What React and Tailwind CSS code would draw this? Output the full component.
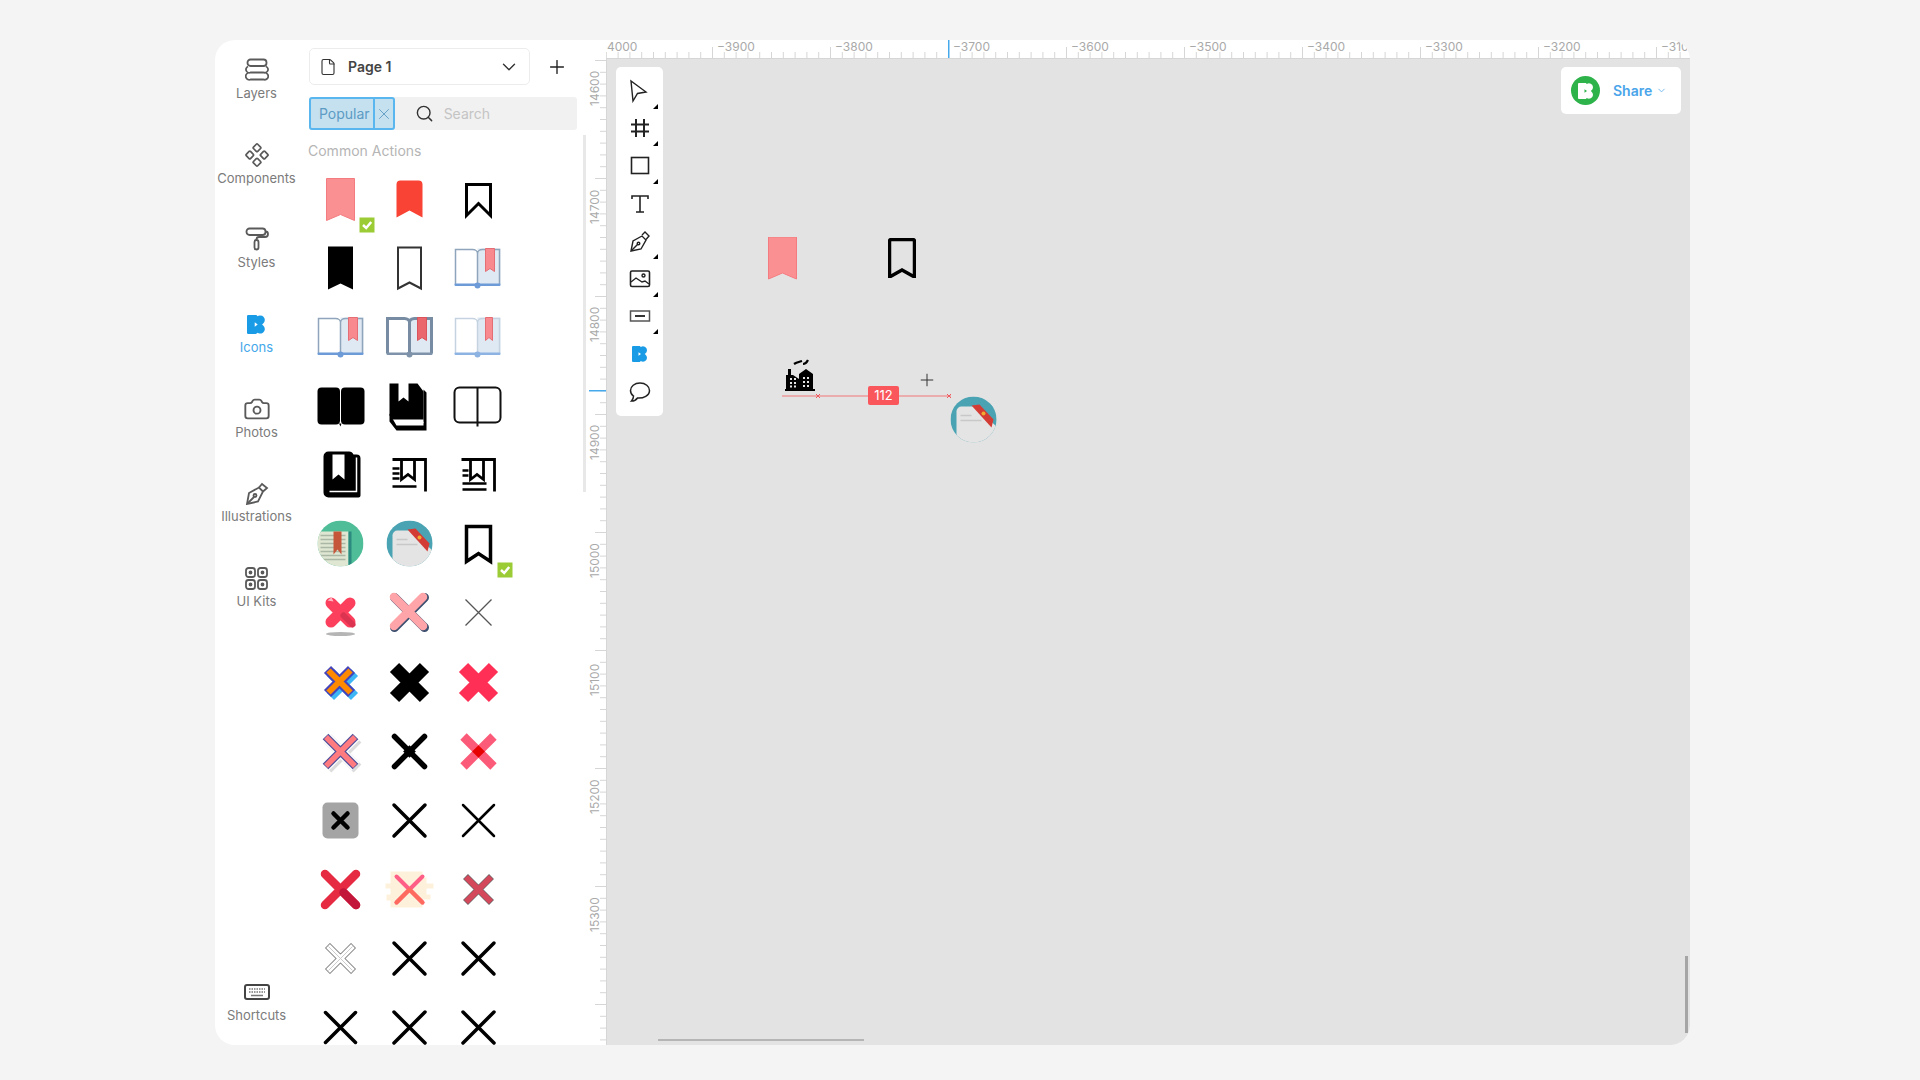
import React from 'react'
import { Plus, ChevronDown, Search, X, File, Camera } from 'lucide-react'

const LOGO = 'M0 1a1 1 0 0 1 1-1h6c1 0 1.500.5 1.800 1a4 4 0 0 1 6.200 3c0 2-1 3-2.300 4 1.300 1 2.300 2 2.300 4a4 4 0 0 1-6.200 3c-.3.500-.8 1-1.800 1H1a1 1 0 0 1-1-1z M6.500 6.200 9 8 6.500 9.800z'

const Logo = ({ fill = '#1a9be6', size = 16 }) => (
    <svg width={size} height={size} viewBox="0 0 16 16"><path d={LOGO} fill={fill} fillRule="evenodd" /></svg>
)

// all cell drawings are centred on 0,0 of a 69px box
const Cell = ({ children }) => (
    <svg width="69" height="69" viewBox="-34.5 -34.5 69 69" className="block overflow-visible">{children}</svg>
)

const Badge = () => (
    <g>
        <rect x="19" y="19" width="15" height="15" fill="#9ccc35" />
        <path d="M22.500 26.500l3.200 3 5-6" fill="none" stroke="#fff" strokeWidth="2.500" />
    </g>
)

const Mark = ({ w, top, bottom, notch, fill = 'none', stroke, sw = 0, r = 0 }) => (
    <path
        d={`M${-w} ${bottom}V${top + r}${r ? `a${r} ${r} 0 0 1 ${r} ${-r}` : ''}H${w - r}${r ? `a${r} ${r} 0 0 1 ${r} ${r}` : ''}V${bottom}L0 ${notch}Z`}
        fill={fill}
        stroke={stroke}
        strokeWidth={sw}
    />
)

const Book = ({ dx = 0, frame = '#8fa5bb', sw = 1.500, bar = '#6d9bd8', mark = '#f88a8f', markLine = '#e56e74', mw = 9, shade = '#dfe9f3', left = '#fff' }) => (
    <g transform={`translate(${dx} 0)`}>
        <rect x="-23" y="-19" width="23" height="36" fill={left} />
        <rect x="0" y="-19" width="23" height="36" fill={shade} />
        <path d="M-22 17V-18H-5C-2-18 0-16 0-14V17M0-14C0-16 2-18 5-18H22V17" fill="none" stroke={frame} strokeWidth={sw} />
        <rect x="-23" y="16" width="46" height="2.500" fill={bar} rx="1" />
        <circle cx="0" cy="18" r="3" fill={bar} />
        <path d={`M${8} -19H${8 + mw}V4L${8 + mw / 2} 1L8 4Z`} fill={mark} stroke={markLine} />
    </g>
)

const Cross = ({ s = 17, sw = 4, color = '#000', cap = 'round' }) => (
    <path d={`M${-s} ${-s}L${s} ${s}M${s} ${-s}L${-s} ${s}`} stroke={color} strokeWidth={sw} strokeLinecap={cap} fill="none" />
)

const Lines = ({ wide }) => (
    <g fill="none" stroke="#000" strokeWidth="2.800">
        <path d="M-17-15H16V17" />
        <path d="M-8-15V5L-1.500 0 5 5V-15" />
        {wide
            ? <path d="M-16-4H-10M-16 1H-10M-16 9H8M-16 15H8" strokeWidth="2.500" />
            : <path d="M-17-6H-10M-17-1H-10M-17 4H-10M-17 12H7" strokeWidth="2.500" />}
    </g>
)

const GreenCircle = () => (
    <g>
        <clipPath id="green-clip"><circle r="23" /></clipPath>
        <g clipPath="url(#green-clip)">
            <rect x="-23" y="-23" width="46" height="46" fill="#4fbe98" />
            <rect x="-23" y="-12" width="31" height="35" fill="#dfe6d2" />
            <rect x="8" y="-12" width="3" height="35" fill="#2d8a80" />
            <path d="M-20-8H5M-20-4H5M-20 0H5M-20 4H5M-20 8H5M-20 12H5M-20 16H5" stroke="#a9b7a4" strokeWidth="1.500" />
            <path d="M-7-12H1V11L-3 6-7 11Z" fill="#c5563a" />
        </g>
    </g>
)

const TealCircle = ({ id }) => (
    <g>
        <clipPath id={id}><circle r="23" /></clipPath>
        <g clipPath={`url(#${id})`}>
            <rect x="-23" y="-23" width="46" height="46" fill="#4aa3b3" />
            <rect x="-17" y="-13" width="40" height="40" rx="5" fill="#e4e4e4" />
            <path d="M-1-15L23 7V-15Z" fill="#4aa3b3" />
            <path d="M-2-14L6-15 20 0 18 8Z" fill="#d23c34" />
            <circle cx="10" cy="-6" r="2" fill="#f2a930" />
            <path d="M-13-4H-2M-13 1H8" stroke="#c8c8c8" strokeWidth="1.500" />
        </g>
    </g>
)

const BlockX = ({ s = 20, sw = 12, color }) => (
    <path d={`M${-s + 6} ${-s + 6}L${s - 6} ${s - 6}M${s - 6} ${-s + 6}L${-s + 6} ${s - 6}`} stroke={color} strokeWidth={sw} />
)

const cells = [
    <g><Mark w={14} top={-20} bottom={22} notch={16} fill="#fb9092" stroke="#f47c80" sw={1} /><Badge /></g>,
    <Mark w={13} top={-18} bottom={19} notch={12} fill="#f94334" r={4} />,
    <Mark w={12} top={-14} bottom={17} notch={5} stroke="#000" sw={3} />,

    <Mark w={12.500} top={-21} bottom={22} notch={16} fill="#000" />,
    <Mark w={11.500} top={-20} bottom={21} notch={15} stroke="#333" sw={2} fill="#fff" />,
    <Book dx={-1} />,

    <Book />,
    <Book frame="#778ca2" sw={3} mark="#e9676d" markLine="#d9545b" bar="#7e93a9" />,
    <Book dx={-1} frame="#c5d3e1" mw={7} bar="#8db3e3" />,

    <g>
        <rect x="-23" y="-18" width="22.500" height="37" rx="4" />
        <rect x="0.500" y="-18" width="23.500" height="37" rx="4" />
        <path d="M-1.500 18H1L0 21Z" />
    </g>,
    <g>
        <path d="M-20-22H-11V-4L-6-8-1-4V-22H8L14-14V14H-17L-20 10Z" fill="#000" />
        <path d="M14-16L17-13V25H-13L-20 16V8L-13 20H14Z" fill="#000" />
        <path d="M-13 17H14" stroke="#fff" strokeWidth="1.500" />
    </g>,
    <g fill="none" stroke="#111" strokeWidth="2"><rect x="-24" y="-18" width="46" height="35" rx="5" /><path d="M-1-18V21" /></g>,

    <g>
        <path d="M-12-23H8A5 5 0 0 1 13-20H16A4 4 0 0 1 20-16V21A2 2 0 0 1 18 23H-12A5 5 0 0 1-17 18V-18A5 5 0 0 1-12-23Z" fill="#000" />
        <path d="M16-17V17H-11" fill="none" stroke="#fff" strokeWidth="1.500" />
        <path d="M-8-20H4V5L-2 0-8 5Z" fill="#fff" />
    </g>,
    <Lines />,
    <Lines wide />,

    <GreenCircle />,
    <TealCircle id="teal-grid" />,
    <g><Mark w={12} top={-17} bottom={18} notch={10} stroke="#000" sw={3.500} /><Badge /></g>,

    <g>
        <ellipse cy="21.500" rx="14.500" ry="2" fill="#b5b5b5" />
        <Cross s={9.500} sw={11} color="#fb3f5c" />
        <path d="M3 3L12 12" stroke="#dc3350" strokeWidth="6" strokeLinecap="round" />
        <path d="M-13-12L-9-15-7-11Z" fill="#ffb6c2" />
    </g>,
    <g>
        <Cross s={15} sw={9} color="#3d5070" cap="round" />
        <g transform="translate(-1 -1)"><Cross s={14.500} sw={8.500} color="#ffa4a8" /></g>
    </g>,
    <Cross s={13} sw={1.300} color="#555" cap="butt" />,

    <g>
        <g transform="translate(2 2)"><BlockX s={18} sw={10} color="#3cb6f5" /></g>
        <g transform="translate(-1 -1)"><BlockX s={18} sw={10} color="#4444bb" /></g>
        <g transform="translate(-1 -1)"><BlockX s={17} sw={6} color="#ff8a00" /></g>
    </g>,
    <BlockX s={21} sw={13} color="#000" />,
    <BlockX s={21} sw={13} color="#ff2f55" />,

    <g>
        <g transform="translate(2 2)"><Cross s={15} sw={11} color="#dcdcdc" cap="butt" /></g>
        <Cross s={15} sw={10.500} color="#fff" cap="butt" />
        <Cross s={15} sw={8} color="#4e4f9a" cap="butt" />
        <Cross s={14.500} sw={5.500} color="#ff7b7f" cap="butt" />
    </g>,
    <g>
        <Cross s={15} sw={5.500} />
        <rect x="-4.500" y="-4.500" width="9" height="9" transform="rotate(45)" />
    </g>,
    <g>
        <g opacity="0.8"><Cross s={15} sw={9} color="#fb3158" cap="butt" /></g>
        <rect x="-4.500" y="-4.500" width="9" height="9" transform="rotate(45)" fill="#e60000" />
    </g>,

    <g>
        <rect x="-18" y="-18" width="36" height="36" rx="5" fill="#a4a4a4" />
        <Cross s={7} sw={4.500} />
    </g>,
    <Cross s={15.500} sw={3.500} />,
    <Cross s={15.500} sw={2.500} />,

    <g>
        <Cross s={15.500} sw={8.500} color="#e62a42" cap="round" />
        <path d="M3 3L15.500 15.500" stroke="#c2163a" strokeWidth="8.500" strokeLinecap="round" />
    </g>,
    <g>
        <path d="M-19-18H13V-12H17V-6H24V-1H17V5H21V10H13V18H-19V11H-23V5H-19V-1H-24V-6H-19Z" fill="#fdf1dc" />
        <Cross s={13} sw={4} color="#ff5f86" />
        <path d="M0 0L-13 13M0 0L13 13" stroke="#ff6a5f" strokeWidth="4" strokeLinecap="round" />
    </g>,
    <g>
        <Cross s={13} sw={7} color="#666" cap="butt" />
        <Cross s={12.500} sw={5.800} color="#d4485c" cap="butt" />
    </g>,

    <g>
        <Cross s={13} sw={7} color="#666" cap="butt" />
        <Cross s={12.500} sw={5.500} color="#fff" cap="butt" />
        <Cross s={12} sw={1} color="#ccc" cap="butt" />
    </g>,
    <Cross s={15.500} sw={3.500} />,
    <Cross s={15.500} sw={3.500} />,

    <Cross s={15} sw={3.500} />,
    <Cross s={15.500} sw={3.500} />,
    <Cross s={15.500} sw={3.500} />,
]

const RailIcon = ({ name }) => {
    const props = { fill: 'none', stroke: '#5a5a5a', strokeWidth: 1.800 }
    if (name === 'layers') return (
        <svg width="24" height="24" viewBox="0 0 24 24" {...props}>
            <rect x="2.500" y="1.500" width="19" height="6.500" rx="3" />
            <path d="M3 8.500a3 3 0 0 0 2.500 6h13a3 3 0 0 0 2.500-6M3 15a3 3 0 0 0 2.500 6.500h13A3 3 0 0 0 21 15" />
        </svg>
    )
    if (name === 'components') return (
        <svg width="24" height="24" viewBox="0 0 24 24" {...props} strokeWidth="1.700">
            <rect x="9" y="1.800" width="6" height="6" rx="1" transform="rotate(45 12 4.800)" />
            <rect x="9" y="16.200" width="6" height="6" rx="1" transform="rotate(45 12 19.200)" />
            <rect x="1.800" y="9" width="6" height="6" rx="1" transform="rotate(45 4.800 12)" />
            <rect x="16.200" y="9" width="6" height="6" rx="1" transform="rotate(45 19.200 12)" />
        </svg>
    )
    if (name === 'styles') return (
        <svg width="24" height="24" viewBox="0 0 24 24" {...props}>
            <rect x="1.500" y="1.500" width="19" height="6.500" rx="3" />
            <path d="M20.500 4.500c2 0 2.500 1 2.500 2.500s-1 3-3 3h-6c-2 0-2.500 1-2.500 2.500" />
            <rect x="9.500" y="13" width="4" height="9.500" rx="2" />
        </svg>
    )
    if (name === 'logo') return <Logo size={19} />
    if (name === 'camera') return <Camera size={28} color="#5a5a5a" strokeWidth={1.600} />
    if (name === 'pen') return (
        <svg width="24" height="24" viewBox="0 0 24 24" {...props}>
            <path d="M2 23L4 12 14 6.500 18 10.500 13 20.500Z" />
            <path d="M2.500 22.500L9 16" />
            <circle cx="10" cy="14.500" r="1.500" />
            <path d="M14 6.500L17 3 22 7 18 10.500" />
        </svg>
    )
    if (name === 'kits') return (
        <svg width="23" height="23" viewBox="0 0 23 23" {...props}>
            <rect x="1" y="1" width="9" height="9" rx="2.500" /><rect x="13" y="1" width="9" height="9" rx="2.500" />
            <rect x="1" y="13" width="9" height="9" rx="2.500" /><rect x="13" y="13" width="9" height="9" rx="2.500" />
            <circle cx="5.500" cy="5.500" r="1" /><circle cx="17.500" cy="5.500" r="1" /><circle cx="5.500" cy="17.500" r="1" /><circle cx="17.500" cy="17.500" r="1" />
        </svg>
    )
    return (
        <svg width="26" height="16" viewBox="0 0 26 16" {...props}>
            <rect x="1" y="1" width="24" height="14" rx="2" strokeWidth="2" stroke="#444" />
            <path d="M5 5h16M5 8h16" strokeDasharray="1.500 1" strokeWidth="1.500" stroke="#777" />
            <path d="M7 11.500h12" stroke="#777" strokeWidth="1.500" />
        </svg>
    )
}

const railItems = [
    { name: 'layers', label: 'Layers' },
    { name: 'components', label: 'Components' },
    { name: 'styles', label: 'Styles' },
    { name: 'logo', label: 'Icons', active: true },
    { name: 'camera', label: 'Photos' },
    { name: 'pen', label: 'Illustrations' },
    { name: 'kits', label: 'UI Kits' },
]

const RailItem = ({ item }) => (
    <div className={'flex h-[84.700px] w-full flex-col items-center ' + (item.active ? 'text-[#44a7ea]' : 'text-[#7b7b7b]')}>
        <div className="flex h-[26px] items-center justify-center"><RailIcon name={item.name} /></div>
        <span className="mt-[1px] text-[13px] leading-[18px]">{item.label}</span>
    </div>
)

const toolIcons = [
    { more: true, d: <path d="M3 2L5 22 9.500 14.500 18 13Z" /> },
    { more: true, d: <path d="M8 3V21M16 3V21M3 8.500H21M3 15.500H21" strokeWidth="2" /> },
    { more: true, d: <rect x="3.500" y="3.500" width="17" height="16" strokeWidth="1.600" /> },
    { d: <path d="M4 7V4H20V7M12 4V20M8 20H16" strokeWidth="1.600" /> },
    { more: true, d: <g><path d="M3 22L5 12 14 7 18 11 13 20Z" /><path d="M3.500 21.500L9.500 15.500" /><circle cx="10.500" cy="14.500" r="1.300" /><path d="M14 6L17 3 21 7 18 10.500" /></g> },
    { more: true, d: <g><rect x="2.500" y="4" width="19" height="15.500" rx="1.500" strokeWidth="1.600" /><path d="M3 15L8 11 14 15 17 14 21 17" /><circle cx="15.500" cy="8.500" r="1.500" /></g> },
    { more: true, d: <g><rect x="2.500" y="7" width="19" height="10" strokeWidth="1.500" stroke="#555" /><path d="M7 12H17" strokeWidth="2" stroke="#333" /></g> },
    { logo: true },
    { d: <path d="M12 3C6.500 3 2.500 6.500 2.500 10.500 2.500 13 4 15 5.500 16 5.500 18 4.500 20 3.500 21 6 21 8.500 19.500 9.500 18 15.500 18.500 21.500 15.500 21.500 10.500 21.500 6.500 17.500 3 12 3Z" strokeWidth="1.500" /> },
]

const Tool = ({ tool }) => (
    <div className="relative flex h-[37.600px] w-full items-center justify-center">
        {tool.logo ? <Logo /> : (
            <svg width="24" height="24" viewBox="0 0 24 24" fill="none" stroke="#222" strokeWidth="1.400">{tool.d}</svg>
        )}
        {tool.more && <span className="absolute bottom-[1px] right-[5px] h-0 w-0 border-b-[5px] border-l-[5px] border-b-black border-l-transparent" />}
    </div>
)

const TopRuler = () => {
    const majors = [-1, 0, 1, 2, 3, 4, 5, 6, 7, 8]
    const labels = ['-4000', '-3900', '-3800', '-3700', '-3600', '-3500', '-3400', '-3300', '-3200', '-3100']
    const minors = []
    for (let i = 0; i < 100; i++) minors.push(i)
    return (
        <svg width="1081" height="18" className="block">
            {minors.map(i => <rect key={i} x={-12 + i * 11.8} y={i % 10 === 0 ? 7 : 12} width="1" height={i % 10 === 0 ? 11 : 6} fill="#d6d6d6" />)}
            {majors.map((k, i) => <text key={k} x={107 + k * 118 + 4} y="11" fontSize="12" fill="#a9a9a9">{labels[i].replace('-', '\u2212')}</text>)}
            <rect x="342" y="0" width="1.500" height="18" fill="#45a9ec" />
        </svg>
    )
}

const SideRuler = () => {
    const marks = []
    for (let i = 0; i < 90; i++) marks.push(i)
    const labels = [14600, 14700, 14800, 14900, 15000, 15100, 15200, 15300]
    return (
        <svg width="17" height="987" className="block">
            {marks.map(i => <rect key={i} x={i % 10 === 0 ? 6 : 11} y={-4.500 + i * 11.8 + 5.900 + 0.600} width={i % 10 === 0 ? 11 : 6} height="1" fill="#d6d6d6" />)}
            {labels.map((l, i) => <text key={l} transform={`translate(10 ${48 + i * 118}) rotate(-90)`} fontSize="12" fill="#a9a9a9">{l}</text>)}
            <rect x="-2" y="332" width="19" height="1.500" fill="#45a9ec" />
        </svg>
    )
}

export default function App() {
    return (
        <div className="h-[1080px] w-[1920px] overflow-hidden bg-[#f4f4f4] pl-[215px] pt-[40px] font-['Inter',sans-serif]">
            <div className="flex h-[1005px] w-[1475px] overflow-hidden rounded-[20px] bg-white">
                <div className="flex w-[85px] shrink-0 flex-col items-center pb-[21px] pr-[2px] pt-[17px]">
                    {railItems.map(item => <RailItem key={item.name} item={item} />)}
                    <div className="mt-auto flex w-full flex-col items-center text-[#7b7b7b]">
                        <RailIcon name="keys" />
                        <span className="mt-[6px] text-[13px] leading-[18px]">Shortcuts</span>
                    </div>
                </div>

                <div className="relative flex w-[289px] shrink-0 flex-col">
                    <div className="flex items-center pl-[9px] pt-[8px]">
                        <div className="flex h-[37px] w-[221px] items-center rounded-[5px] border border-[#ececec] pl-[9px] pr-[9px]">
                            <File size={18} color="#333" strokeWidth={1.500} />
                            <span className="ml-[11px] text-[14px] font-semibold text-[#444]">Page 1</span>
                            <ChevronDown size={22} color="#333" strokeWidth={1.500} className="ml-auto" />
                        </div>
                        <Plus size={22} color="#222" strokeWidth={1.500} className="ml-[16px]" />
                    </div>
                    <div className="ml-[9px] mt-[12px] flex h-[37px] w-[268px] items-center rounded-[3px] bg-[#f1f1f1]">
                        <div className="flex h-[33px] items-stretch rounded-[3px] border-2 border-[#5ab6ee] bg-[#c5e1f0] text-[#5c9bc4]">
                            <span className="flex items-center border-r-2 border-[#5ab6ee] pl-[8px] pr-[3px] text-[14px]">Popular</span>
                            <span className="flex w-[18px] items-center justify-center"><X size={18} strokeWidth={1.200} /></span>
                        </div>
                        <Search size={19} color="#333" strokeWidth={1.800} className="ml-[20px]" />
                        <span className="ml-[10px] text-[14px] text-[#c4c4c4]">Search</span>
                    </div>
                    <div className="ml-[8px] mt-[11px] text-[14px] leading-[20px] text-[#b5b5b5]">Common Actions</div>
                    <div className="ml-[5.500px] mt-[2.500px] grid w-[207px] shrink-0 auto-rows-[69.170px] grid-cols-3">
                        {cells.map((cell, i) => <Cell key={i}>{cell}</Cell>)}
                    </div>
                    <span className="absolute left-[283px] top-[95px] h-[357px] w-[3px] bg-[#e8e8e8]" />
                </div>

                <div className="flex min-w-0 flex-1 flex-col">
                    <div className="flex h-[18px] shrink-0">
                        <div className="w-[17px] shrink-0" />
                        <TopRuler />
                    </div>
                    <div className="flex min-h-0 flex-1">
                        <div className="w-[17px] shrink-0 overflow-visible"><SideRuler /></div>
                        <div className="relative flex-1 overflow-hidden border-l border-t border-[#d6d6d6] bg-[#e3e3e3]">
                            <div className="absolute left-[9px] top-[8px] flex h-[349px] w-[47px] flex-col rounded-[5px] bg-white py-[5px]">
                                {toolIcons.map((tool, i) => <Tool key={i} tool={tool} />)}
                            </div>

                            <div className="absolute right-[9px] top-[8px] flex h-[47px] w-[120px] items-center rounded-[5px] bg-white pl-[10px]">
                                <span className="flex h-[29px] w-[29px] items-center justify-center rounded-full bg-[#2eb24a]"><Logo fill="#fff" size={16} /></span>
                                <span className="ml-[13px] text-[14px] font-semibold text-[#4aa5ea]">Share</span>
                                <ChevronDown size={11} color="#6bb6ee" strokeWidth={2} className="ml-[4px]" />
                            </div>

                            <svg className="absolute left-[161px] top-[178px]" width="29" height="43" viewBox="-14.500 -21 29 43"><Mark w={14} top={-21} bottom={21} notch={15} fill="#fb9092" stroke="#f47c80" sw={1} /></svg>
                            <svg className="absolute left-[281px] top-[179px]" width="28" height="40" viewBox="-14 -20 28 40"><Mark w={12.500} top={-18.500} bottom={19} notch={12} stroke="#000" sw={3.500} r={2} /></svg>

                            <svg className="absolute left-[178px] top-[300px]" width="30" height="33" viewBox="0 0 30 33">
                                <path d="M0 33V30H1V16H3V10H6V16H8L14 20V15L21 10 28 15V30H30V32H0Z" fill="#000" />
                                <path d="M9 5C12 3 14 3 17 2M18 5C20 5 22 3 23 1" stroke="#000" strokeWidth="2.200" fill="none" />
                                <path d="M5 20H7M9 20H11M5 24H7M9 24H11M5 27.500H7M9 27.500H11M18 19H20M22 19H24M18 23H20M22 23H24M18 27H20M22 27H24" stroke="#e3e3e3" strokeWidth="2" />
                            </svg>

                            <svg className="absolute left-[175px] top-[328px]" width="172" height="18" viewBox="0 0 172 18">
                                <path d="M0 9H169" stroke="#ee9a9c" strokeWidth="1.300" />
                                <path d="M34 7L38 11M38 7L34 11M165 7L169 11M169 7L165 11" stroke="#ef5a60" strokeWidth="1" />
                            </svg>
                            <span className="absolute left-[261px] top-[327px] flex h-[19px] w-[31px] items-center justify-center rounded-[2px] bg-[#f9575c] text-[13px] text-white">112</span>
                            <Plus size={20} color="#333" strokeWidth={1.200} className="absolute left-[310px] top-[311px]" />

                            <svg className="absolute left-[343px] top-[337px]" width="47" height="47" viewBox="-23.500 -23.500 47 47"><TealCircle id="teal-canvas" /></svg>

                            <span className="absolute bottom-[4px] left-[51px] h-[2px] w-[206px] bg-[#b5b5b5]" />
                            <span className="absolute right-[2px] top-[897px] h-[77px] w-[3px] bg-[#a5a5a5]" />
                        </div>
                    </div>
                </div>
            </div>
        </div>
    )
}
